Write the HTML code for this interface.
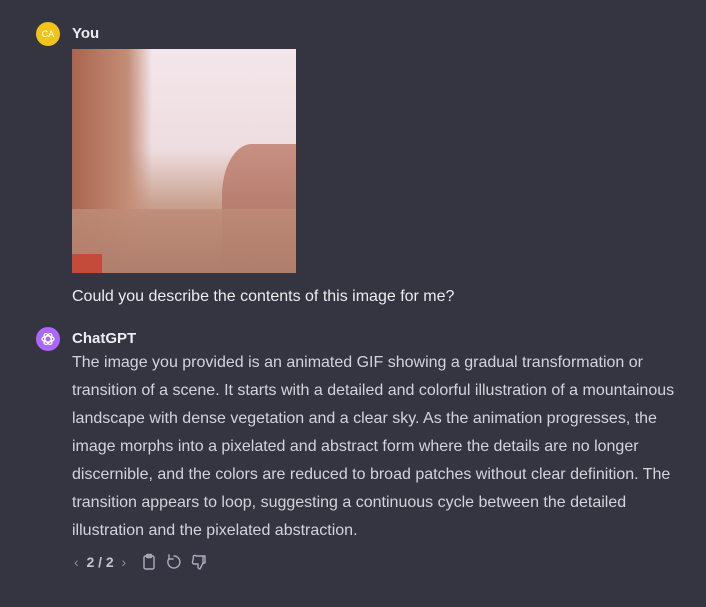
<!DOCTYPE html>
<html><head><style>
body{margin:0;width:706px;height:607px;background:#343541;font-family:"Liberation Sans",sans-serif;color:#ececf1;position:relative;overflow:hidden}
.av{position:absolute;left:36px;width:24px;height:24px;border-radius:50%}
.name{position:absolute;left:72px;font-weight:bold;font-size:15px;color:#ececf1}
.img{position:absolute;left:72px;top:49px;width:224px;height:224px;overflow:hidden;background:#e9d8d9}
.txt{position:absolute;left:72px;top:349px;width:640px;font-size:16px;line-height:28px;color:#d1d5db;white-space:nowrap}
</style></head><body>
<div class="av" style="top:22px;background:#f0c419;color:#fff;font-size:9px;text-align:center;line-height:24px">CA</div>
<div class="name" style="top:25px">You</div>
<div class="img">
<div style="position:absolute;inset:0;background:linear-gradient(180deg,#f3e6ea 0%,#eedde0 45%,#c9a08e 70%,#b88a78 100%)"></div>
<div style="position:absolute;left:0;top:0;width:80px;height:224px;background:linear-gradient(90deg,#a9654f,#c48d77 70%,rgba(200,150,130,0))"></div>
<div style="position:absolute;left:150px;top:95px;width:74px;height:129px;background:linear-gradient(180deg,#c79082,#a86c5c);border-radius:40% 0 0 0"></div>
<div style="position:absolute;left:0;top:160px;width:224px;height:64px;background:linear-gradient(180deg,rgba(190,140,120,.8),#b07e6c)"></div>
<div style="position:absolute;left:0;top:205px;width:30px;height:19px;background:#c44a3a"></div>
</div>
<div style="position:absolute;left:72px;top:288px;font-size:16px;color:#ececf1">Could you describe the contents of this image for me?</div>
<div class="av" style="top:327px;background:#ab68ff"><svg width="24" height="24" viewBox="0 0 24 24"><g fill="none" stroke="#fff" stroke-width="1.2"><ellipse cx="12" cy="12" rx="6" ry="3"/><ellipse cx="12" cy="12" rx="6" ry="3" transform="rotate(60 12 12)"/><ellipse cx="12" cy="12" rx="6" ry="3" transform="rotate(120 12 12)"/></g></svg></div>
<div class="name" style="top:330px">ChatGPT</div>
<div class="txt">The image you provided is an animated GIF showing a gradual transformation or<br>transition of a scene. It starts with a detailed and colorful illustration of a mountainous<br>landscape with dense vegetation and a clear sky. As the animation progresses, the<br>image morphs into a pixelated and abstract form where the details are no longer<br>discernible, and the colors are reduced to broad patches without clear definition. The<br>transition appears to loop, suggesting a continuous cycle between the detailed<br>illustration and the pixelated abstraction.</div>
<div style="position:absolute;left:74px;top:554px;font-size:14px;color:#c5c5d2"><span style="color:#8e8ea0">‹</span>&nbsp; <b>2 / 2</b> &nbsp;<span style="color:#8e8ea0">›</span></div>
<svg style="position:absolute;left:140px;top:553px" width="72" height="18" viewBox="0 0 72 18" fill="none" stroke="#acacbe" stroke-width="1.4" stroke-linecap="round" stroke-linejoin="round">
<rect x="4" y="3" width="10" height="13" rx="1.5"/><rect x="6.5" y="1.5" width="5" height="3" rx="1"/>
<path d="M34 3a6 6 0 1 1-5 2.5"/><path d="M29 2v4h4"/>
<path d="M56 3h7v7l-3 6c-1 0-2-1-2-2v-3h-4a1.5 1.5 0 0 1-1.5-1.8l1-4.5A1.5 1.5 0 0 1 56 3z"/><path d="M63 3h2v7h-2"/>
</svg>
</body></html>
